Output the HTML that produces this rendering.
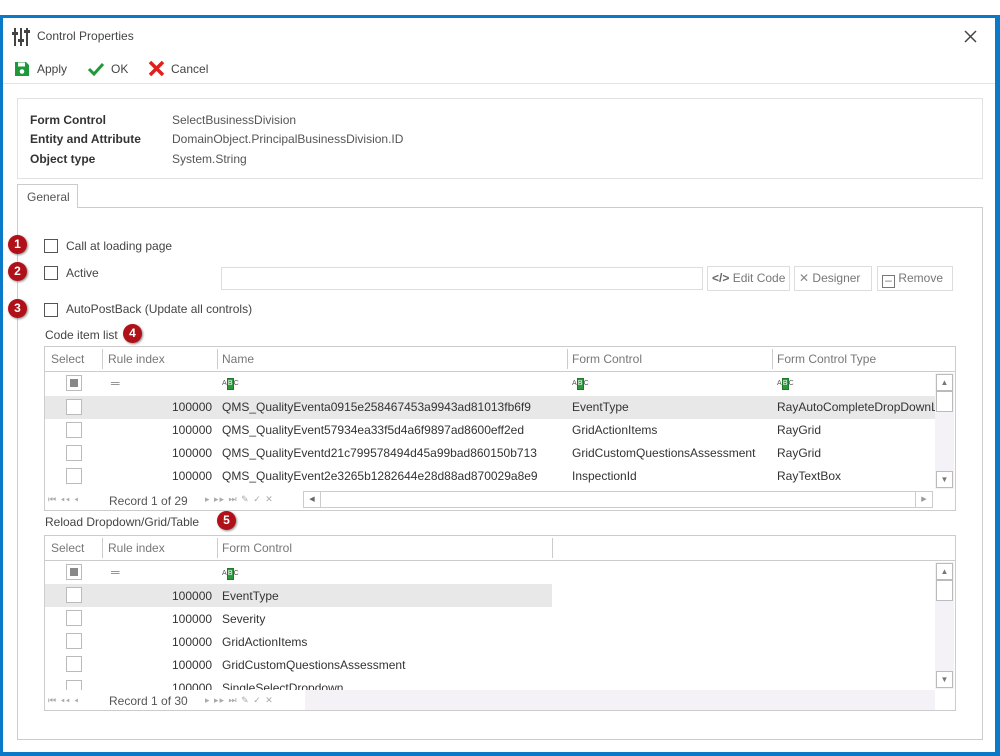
<!DOCTYPE html>
<html><head><meta charset="utf-8"><style>
*{box-sizing:border-box;margin:0;padding:0}
body{width:1000px;height:756px;background:#fff;position:relative;overflow:hidden;font-family:"Liberation Sans",sans-serif;font-size:12px;color:#333}
.a{position:absolute;white-space:nowrap}
.t{position:absolute;white-space:nowrap;line-height:14px}
.bd{border:1px solid #d4d4d4}
.cb{position:absolute;width:14px;height:14px;border:1px solid #555;background:#fff}
.gcb{position:absolute;width:16px;height:16px;border:1px solid #bbb;background:#fff}
.badge{position:absolute;width:19px;height:19px;border-radius:50%;background:#b01018;color:#fff;font-weight:bold;font-size:12px;text-align:center;line-height:19px;box-shadow:1px 1px 2px #888}
.hd{color:#777}
.sep{position:absolute;width:1px;background:#ccc}
.btn{position:absolute;height:25px;border:1px solid #ddd;background:#fff;color:#777;line-height:23px;padding-left:4px}
.abc{position:absolute;font-size:7px;color:#555;line-height:10px}
.abc b{display:inline-block;background:#2a9a3a;color:#fff;width:7px;text-align:center;border:1px solid #1c7a2a;font-weight:normal}
.nav{position:absolute;color:#aaa;font-size:9px;letter-spacing:1px}
</style></head><body>
<!-- frame -->
<div class="a" style="left:0;top:15px;width:1000px;height:741px;border:3px solid #0a7ac8;border-right-width:5px;border-bottom-width:4px"></div>
<!-- title -->
<svg class="a" style="left:12px;top:27px" width="18" height="20" viewBox="0 0 18 20"><g stroke="#444" stroke-width="2" fill="none"><line x1="3" y1="1" x2="3" y2="19"/><line x1="9" y1="1" x2="9" y2="19"/><line x1="15" y1="1" x2="15" y2="19"/></g><g fill="#444"><rect x="0" y="5" width="6" height="3"/><rect x="6" y="12" width="6" height="3"/><rect x="12" y="3" width="6" height="3"/></g></svg>
<div class="t" style="left:37px;top:29px;color:#444">Control Properties</div>
<svg class="a" style="left:964px;top:30px" width="13" height="13"><path d="M1 1L12 12M12 1L1 12" stroke="#444" stroke-width="1.5"/></svg>
<!-- toolbar -->
<svg class="a" style="left:14px;top:61px" width="16" height="16" viewBox="0 0 16 16"><path d="M1 1h11l3 3v11H1z" fill="#1c9a3a"/><rect x="4" y="1.5" width="7" height="4" fill="#fff"/><circle cx="8" cy="10.5" r="2.3" fill="#fff"/></svg>
<div class="t" style="left:37px;top:62px;color:#444">Apply</div>
<svg class="a" style="left:87px;top:62px" width="18" height="14"><path d="M2 7l5 5L16 2" stroke="#1f9a3a" stroke-width="3" fill="none"/></svg>
<div class="t" style="left:111px;top:62px;color:#444">OK</div>
<svg class="a" style="left:148px;top:60px" width="17" height="17"><path d="M2 2L15 15M15 2L2 15" stroke="#e0201c" stroke-width="3.5"/></svg>
<div class="t" style="left:171px;top:62px;color:#444">Cancel</div>
<div class="a" style="left:3px;top:83px;width:992px;height:1px;background:#e4e4e4"></div>
<!-- info -->
<div class="a bd" style="left:17px;top:98px;width:966px;height:81px;border-color:#e2e2e2"></div>
<div class="t" style="left:30px;top:113px;font-weight:bold;color:#333">Form Control</div>
<div class="t" style="left:30px;top:132px;font-weight:bold;color:#333">Entity and Attribute</div>
<div class="t" style="left:30px;top:152px;font-weight:bold;color:#333">Object type</div>
<div class="t" style="left:172px;top:113px;color:#555">SelectBusinessDivision</div>
<div class="t" style="left:172px;top:132px;color:#555">DomainObject.PrincipalBusinessDivision.ID</div>
<div class="t" style="left:172px;top:152px;color:#555">System.String</div>
<!-- tab -->
<div class="a" style="left:17px;top:207px;width:966px;height:533px;border:1px solid #ccc"></div>
<div class="a" style="left:17px;top:184px;width:61px;height:24px;border:1px solid #ccc;border-bottom:none;background:#fff;color:#555;padding:5px 0 0 9px">General</div>
<!-- badges -->
<div class="badge" style="left:8px;top:235px">1</div>
<div class="badge" style="left:8px;top:262px">2</div>
<div class="badge" style="left:8px;top:299px">3</div>
<div class="badge" style="left:123px;top:324px">4</div>
<div class="badge" style="left:217px;top:511px">5</div>
<div class="cb" style="left:44px;top:239px"></div>
<div class="t" style="left:66px;top:239px;color:#444">Call at loading page</div>
<div class="cb" style="left:44px;top:266px"></div>
<div class="t" style="left:66px;top:266px;color:#444">Active</div>
<div class="cb" style="left:44px;top:303px"></div>
<div class="t" style="left:66px;top:302px;color:#444">AutoPostBack (Update all controls)</div>
<div class="a" style="left:221px;top:267px;width:482px;height:23px;border:1px solid #ddd"></div>
<div class="btn" style="left:707px;top:266px;width:83px"><span style="color:#666;font-weight:bold">&lt;/&gt;</span> Edit Code</div>
<div class="btn" style="left:794px;top:266px;width:78px"><span style="color:#888">✕</span> Designer</div>
<div class="btn" style="left:877px;top:266px;width:76px"><span style="display:inline-block;width:13px;height:13px;border:1px solid #777;vertical-align:-2px;text-align:center;line-height:9px">–</span> Remove</div>
<div class="t" style="left:45px;top:328px;color:#444">Code item list</div>
<!-- grid1 -->
<div class="a" style="left:44px;top:346px;width:912px;height:165px;border:1px solid #ccc"></div>
<div class="a" style="left:45px;top:371px;width:910px;height:1px;background:#ccc"></div>
<div class="sep" style="left:102px;top:349px;height:20px"></div>
<div class="sep" style="left:217px;top:349px;height:20px"></div>
<div class="sep" style="left:567px;top:349px;height:20px"></div>
<div class="sep" style="left:772px;top:349px;height:20px"></div>
<div class="t hd" style="left:51px;top:352px">Select</div>
<div class="t hd" style="left:108px;top:352px">Rule index</div>
<div class="t hd" style="left:222px;top:352px">Name</div>
<div class="t hd" style="left:572px;top:352px">Form Control</div>
<div class="t hd" style="left:777px;top:352px">Form Control Type</div>
<div class="gcb" style="left:66px;top:375px"><div style="margin:3px;width:8px;height:8px;background:#888"></div></div>
<div class="t" style="left:111px;top:376px;color:#888">═</div>
<div class="abc" style="left:222px;top:378px">A<b>B</b>C</div>
<div class="abc" style="left:572px;top:378px">A<b>B</b>C</div>
<div class="abc" style="left:777px;top:378px">A<b>B</b>C</div>
<div class="a" style="left:45px;top:396px;width:890px;height:23px;background:#e8e8e8"></div>
<div class="a" style="left:935px;top:373px;width:19px;height:116px;background:#f4f2f6"></div>
<div class="a" style="left:936px;top:374px;width:17px;height:17px;border:1px solid #bbb;background:#fff;font-size:8px;color:#777;text-align:center;line-height:15px">▲</div>
<div class="a" style="left:936px;top:391px;width:17px;height:21px;border:1px solid #bbb;background:#fff"></div>
<div class="a" style="left:936px;top:471px;width:17px;height:17px;border:1px solid #bbb;background:#fff;font-size:8px;color:#777;text-align:center;line-height:15px">▼</div>
<div class="gcb" style="left:66px;top:399px"></div><div class="gcb" style="left:66px;top:422px"></div><div class="gcb" style="left:66px;top:445px"></div><div class="gcb" style="left:66px;top:468px"></div>
<div class="t" style="left:172px;top:400px">100000</div><div class="t" style="left:222px;top:400px">QMS_QualityEventa0915e258467453a9943ad81013fb6f9</div><div class="t" style="left:572px;top:400px">EventType</div><div class="t" style="left:777px;top:400px;width:158px;overflow:hidden">RayAutoCompleteDropDownList</div>
<div class="t" style="left:172px;top:423px">100000</div><div class="t" style="left:222px;top:423px">QMS_QualityEvent57934ea33f5d4a6f9897ad8600eff2ed</div><div class="t" style="left:572px;top:423px">GridActionItems</div><div class="t" style="left:777px;top:423px">RayGrid</div>
<div class="t" style="left:172px;top:446px">100000</div><div class="t" style="left:222px;top:446px">QMS_QualityEventd21c799578494d45a99bad860150b713</div><div class="t" style="left:572px;top:446px">GridCustomQuestionsAssessment</div><div class="t" style="left:777px;top:446px">RayGrid</div>
<div class="t" style="left:172px;top:469px">100000</div><div class="t" style="left:222px;top:469px">QMS_QualityEvent2e3265b1282644e28d88ad870029a8e9</div><div class="t" style="left:572px;top:469px">InspectionId</div><div class="t" style="left:777px;top:469px">RayTextBox</div>
<div class="nav" style="left:48px;top:494px">⏮ ◂◂ ◂</div>
<div class="t" style="left:109px;top:494px;color:#555">Record 1 of 29</div>
<div class="nav" style="left:205px;top:494px">▸ ▸▸ ⏭ ✎ ✓ ✕</div>
<div class="a" style="left:303px;top:491px;width:630px;height:17px;border:1px solid #ccc;background:#fff"></div>
<div class="a" style="left:303px;top:491px;width:18px;height:17px;border:1px solid #ccc;font-size:7px;color:#666;text-align:center;line-height:15px">◀</div>
<div class="a" style="left:915px;top:491px;width:18px;height:17px;border:1px solid #ccc;font-size:7px;color:#999;text-align:center;line-height:15px">▶</div>
<div class="t" style="left:45px;top:515px;color:#444">Reload Dropdown/Grid/Table</div>
<!-- grid2 -->
<div class="a" style="left:44px;top:535px;width:912px;height:176px;border:1px solid #ccc"></div>
<div class="a" style="left:45px;top:560px;width:910px;height:1px;background:#ccc"></div>
<div class="sep" style="left:102px;top:538px;height:20px"></div>
<div class="sep" style="left:217px;top:538px;height:20px"></div>
<div class="sep" style="left:552px;top:538px;height:20px"></div>
<div class="t hd" style="left:51px;top:541px">Select</div>
<div class="t hd" style="left:108px;top:541px">Rule index</div>
<div class="t hd" style="left:222px;top:541px">Form Control</div>
<div class="gcb" style="left:66px;top:564px"><div style="margin:3px;width:8px;height:8px;background:#888"></div></div>
<div class="t" style="left:111px;top:565px;color:#888">═</div>
<div class="abc" style="left:222px;top:568px">A<b>B</b>C</div>
<div class="a" style="left:45px;top:584px;width:507px;height:23px;background:#e8e8e8"></div>
<div class="a" style="left:935px;top:562px;width:19px;height:127px;background:#f4f2f6"></div>
<div class="a" style="left:936px;top:563px;width:17px;height:17px;border:1px solid #bbb;background:#fff;font-size:8px;color:#777;text-align:center;line-height:15px">▲</div>
<div class="a" style="left:936px;top:580px;width:17px;height:21px;border:1px solid #bbb;background:#fff"></div>
<div class="a" style="left:936px;top:671px;width:17px;height:17px;border:1px solid #bbb;background:#fff;font-size:8px;color:#777;text-align:center;line-height:15px">▼</div>
<div class="a" style="left:45px;top:690px;width:890px;height:20px;background:#f4f2f6"></div>
<div class="gcb" style="left:66px;top:587px"></div><div class="gcb" style="left:66px;top:610px"></div><div class="gcb" style="left:66px;top:633px"></div><div class="gcb" style="left:66px;top:656px"></div>
<div class="t" style="left:172px;top:589px">100000</div><div class="t" style="left:222px;top:589px">EventType</div>
<div class="t" style="left:172px;top:612px">100000</div><div class="t" style="left:222px;top:612px">Severity</div>
<div class="t" style="left:172px;top:635px">100000</div><div class="t" style="left:222px;top:635px">GridActionItems</div>
<div class="t" style="left:172px;top:658px">100000</div><div class="t" style="left:222px;top:658px">GridCustomQuestionsAssessment</div>
<div class="a" style="left:45px;top:679px;width:890px;height:11px;overflow:hidden"><div class="gcb" style="left:21px;top:1px"></div><div class="t" style="left:127px;top:2px">100000</div><div class="t" style="left:177px;top:2px">SingleSelectDropdown</div></div>
<div class="a" style="left:45px;top:690px;width:260px;height:20px;background:#fff"></div>
<div class="nav" style="left:48px;top:695px">⏮ ◂◂ ◂</div>
<div class="t" style="left:109px;top:694px;color:#555">Record 1 of 30</div>
<div class="nav" style="left:205px;top:695px">▸ ▸▸ ⏭ ✎ ✓ ✕</div>
</body></html>
